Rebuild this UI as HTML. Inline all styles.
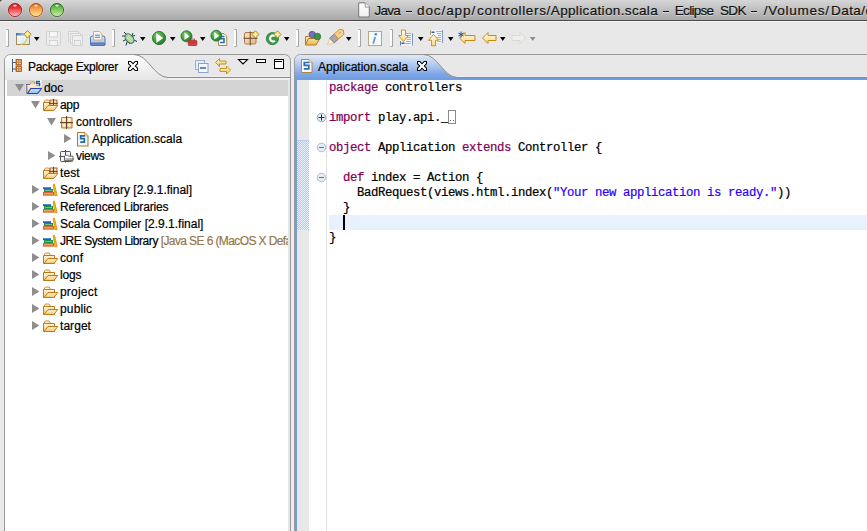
<!DOCTYPE html>
<html><head><meta charset="utf-8">
<style>
*{margin:0;padding:0;box-sizing:border-box}
html,body{width:867px;height:531px;overflow:hidden;background:#e8e8e8;font-family:"Liberation Sans",sans-serif;position:relative}
.a{position:absolute}
#title{left:0;top:0;width:867px;height:21px;background:linear-gradient(#d6d6d6,#a8a8a8);border-bottom:1px solid #4a4a4a}
.tl{width:14px;height:14px;border-radius:50%;top:3px}
.tt{top:3px;font-size:13.5px;color:#111;white-space:nowrap;line-height:16px;text-shadow:0 1px 0 rgba(255,255,255,0.45)}
.dash{top:11px;width:6px;height:1px;background:#111;box-shadow:0 1px 0 rgba(255,255,255,0.45)}
.sep{top:29px;width:3px;height:18px;border-left:1px solid #9a9a9a;border-right:1px solid #c4c4c4;background:#fafafa}
.dd{width:0;height:0;border-left:3px solid transparent;border-right:3px solid transparent;border-top:4px solid #000;top:37px}
/* panels */
#lp{left:4px;top:54px;width:287px;height:480px;border:1px solid #8f8f8f;border-radius:8px 8px 0 0;background:#fff;overflow:hidden}
#lph{left:0;top:0;width:285px;height:23px;background:#e8e8e8;border-bottom:1px solid #999}
#ep{left:294px;top:54px;width:580px;height:480px;border:1px solid #8f8f8f;border-radius:8px 8px 0 0;background:#fff;overflow:hidden}
#eph{left:0;top:0;width:580px;height:23px;background:#e8e8e8;border-bottom:1px solid #999}
.tree{font-size:12px;color:#000;white-space:nowrap;line-height:17px}
.code{font-family:"Liberation Mono",monospace;font-size:12.3px;letter-spacing:-0.38px;line-height:15px;white-space:pre;color:#000}
.kw{color:#7f0055}
.str{color:#2a00ff}
.code{-webkit-text-stroke:0.22px currentColor}
.tree,.tt{-webkit-text-stroke:0.2px currentColor}
</style></head><body>
<div id="title" class="a">
  <svg class="a" style="left:0;top:0" width="370" height="20" viewBox="0 0 370 20">
<defs>
<linearGradient id="tlr" x1="0" y1="0" x2="0" y2="1"><stop offset="0" stop-color="#c02020"/><stop offset="0.35" stop-color="#ee3434"/><stop offset="1" stop-color="#ffc4c4"/></linearGradient>
<linearGradient id="tlo" x1="0" y1="0" x2="0" y2="1"><stop offset="0" stop-color="#d05a18"/><stop offset="0.35" stop-color="#f49a48"/><stop offset="1" stop-color="#ffe890"/></linearGradient>
<linearGradient id="tlg" x1="0" y1="0" x2="0" y2="1"><stop offset="0" stop-color="#3a8a28"/><stop offset="0.35" stop-color="#72be52"/><stop offset="1" stop-color="#d0eca8"/></linearGradient>
<radialGradient id="tlh" cx="0.5" cy="0.5" r="0.5"><stop offset="0" stop-color="#fff" stop-opacity="1"/><stop offset="1" stop-color="#fff" stop-opacity="0"/></radialGradient>
<linearGradient id="gdoc" x1="0" y1="0" x2="0" y2="1"><stop offset="0" stop-color="#ffffff"/><stop offset="1" stop-color="#f0f0f0"/></linearGradient>
</defs>
<circle cx="15" cy="10" r="7.6" fill="#dcdcdc" opacity="0.5"/>
<circle cx="15" cy="10" r="6.6" fill="url(#tlr)" stroke="#9a2020" stroke-width="0.9"/>
<ellipse cx="15" cy="5.6" rx="2.6" ry="1.6" fill="url(#tlh)"/>
<circle cx="36" cy="10" r="7.6" fill="#dcdcdc" opacity="0.5"/>
<circle cx="36" cy="10" r="6.6" fill="url(#tlo)" stroke="#a8501a" stroke-width="0.9"/>
<ellipse cx="36" cy="5.6" rx="2.6" ry="1.6" fill="url(#tlh)"/>
<circle cx="57" cy="10" r="7.6" fill="#dcdcdc" opacity="0.5"/>
<circle cx="57" cy="10" r="6.6" fill="url(#tlg)" stroke="#2e6a22" stroke-width="0.9"/>
<ellipse cx="57" cy="5.6" rx="2.6" ry="1.6" fill="url(#tlh)"/>
<path d="M358.7 2.8h6.5l4.1 4.3v9.9h-10.6z" fill="url(#gdoc)" stroke="#747474" stroke-width="1"/>
<path d="M365.2 2.8v4.3h4.1" fill="#fff" stroke="#8a8a8a" stroke-width="0.9"/>
</svg>
<div class="a tt" style="left:374.40px;letter-spacing:-0.700px">Java</div>
<div class="a tt" style="left:417.00px;letter-spacing:0.914px">doc/app/</div>
<div class="a tt" style="left:477.10px;letter-spacing:0.655px">controllers/</div>
<div class="a tt" style="left:550.80px;letter-spacing:0.350px">Application.scala</div>
<div class="a tt" style="left:674.80px;letter-spacing:-0.700px">Eclipse</div>
<div class="a tt" style="left:720.05px;letter-spacing:-0.700px">SDK</div>
<div class="a tt" style="left:763.70px;letter-spacing:0.762px">/Volumes/</div>
<div class="a tt" style="left:831.00px;letter-spacing:0.450px">Data/d</div>
<div class="a dash" style="left:406px"></div>
<div class="a dash" style="left:663px"></div>
<div class="a dash" style="left:751px"></div>
</div>
<div class="a" style="left:0;top:21px;width:867px;height:1px;background:#f4f4f4"></div>
<div id="toolbar" class="a" style="left:0;top:21px;width:867px;height:33px">
<svg class="a" style="left:0;top:0" width="867" height="33" viewBox="0 21 867 33">
<defs>
 <linearGradient id="gwin" x1="0" y1="0" x2="1" y2="1"><stop offset="0" stop-color="#ffffff"/><stop offset="1" stop-color="#c8e4f8"/></linearGradient>
 <linearGradient id="gtitle" x1="0" y1="0" x2="1" y2="0"><stop offset="0" stop-color="#3a70c0"/><stop offset="1" stop-color="#b8d4f0"/></linearGradient>
 <radialGradient id="ggreen" cx="0.4" cy="0.35" r="0.7"><stop offset="0" stop-color="#8ad070"/><stop offset="0.6" stop-color="#3c9a3c"/><stop offset="1" stop-color="#1e6e28"/></radialGradient>
 <linearGradient id="gprint" x1="0" y1="0" x2="0" y2="1"><stop offset="0" stop-color="#dfe9f7"/><stop offset="1" stop-color="#9cb6de"/></linearGradient>
 <linearGradient id="garrow" x1="0" y1="0" x2="0" y2="1"><stop offset="0" stop-color="#fffcec"/><stop offset="1" stop-color="#f8d888"/></linearGradient>
 <linearGradient id="gtan" x1="0" y1="0" x2="1" y2="1"><stop offset="0" stop-color="#fbe6b8"/><stop offset="1" stop-color="#e0b880"/></linearGradient>
 <linearGradient id="gfold" x1="0" y1="0" x2="0" y2="1"><stop offset="0" stop-color="#fff0c0"/><stop offset="1" stop-color="#e8b858"/></linearGradient>
</defs>
<!-- separators -->
<path d="M6 29.5h2.5v17h-2.5" fill="#fdfdfd" stroke="#a4a4a4" stroke-width="1"/>
<rect x="6" y="29" width="1" height="1" fill="#c8c8c8"/><rect x="6" y="46" width="1" height="1" fill="#c8c8c8"/>
<path d="M112 29.5h2.5v17h-2.5" fill="#fdfdfd" stroke="#a4a4a4" stroke-width="1"/>
<rect x="112" y="29" width="1" height="1" fill="#c8c8c8"/><rect x="112" y="46" width="1" height="1" fill="#c8c8c8"/>
<path d="M234 29.5h2.5v17h-2.5" fill="#fdfdfd" stroke="#a4a4a4" stroke-width="1"/>
<rect x="234" y="29" width="1" height="1" fill="#c8c8c8"/><rect x="234" y="46" width="1" height="1" fill="#c8c8c8"/>
<path d="M296 29.5h2.5v17h-2.5" fill="#fdfdfd" stroke="#a4a4a4" stroke-width="1"/>
<rect x="296" y="29" width="1" height="1" fill="#c8c8c8"/><rect x="296" y="46" width="1" height="1" fill="#c8c8c8"/>
<path d="M358 29.5h2.5v17h-2.5" fill="#fdfdfd" stroke="#a4a4a4" stroke-width="1"/>
<rect x="358" y="29" width="1" height="1" fill="#c8c8c8"/><rect x="358" y="46" width="1" height="1" fill="#c8c8c8"/>
<path d="M390 29.5h2.5v17h-2.5" fill="#fdfdfd" stroke="#a4a4a4" stroke-width="1"/>
<rect x="390" y="29" width="1" height="1" fill="#c8c8c8"/><rect x="390" y="46" width="1" height="1" fill="#c8c8c8"/>
<!-- dropdown arrows -->
<g fill="#000">
 <path d="M34 37h5.5l-2.75 4z"/><path d="M140 37h5.5l-2.75 4z"/><path d="M170 37h5.5l-2.75 4z"/><path d="M200 37h5.5l-2.75 4z"/>
 <path d="M284 37h5.5l-2.75 4z"/><path d="M346 37h5.5l-2.75 4z"/><path d="M418 37h5.5l-2.75 4z"/><path d="M448 37h5.5l-2.75 4z"/>
 <path d="M500 37h5.5l-2.75 4z"/><path d="M530 37h5.5l-2.75 4z" fill="#8c8c8c"/>
</g>
<!-- new wizard -->
<rect x="16.5" y="33.5" width="13" height="11" fill="url(#gwin)" stroke="#a88c50"/>
<rect x="16" y="33" width="10" height="2.5" fill="url(#gtitle)"/>
<path d="M21 44.5 Q27 43 27.5 36" fill="none" stroke="#f0c840" stroke-width="1.2"/>
<path d="M27.5 30.5 L31 34.2 L27.5 38 L24 34.2z" fill="#f8e070" stroke="#a88020" stroke-width="0.9"/>
<path d="M27.5 32v4.5M25.3 34.2h4.4" stroke="#fff8c0" stroke-width="1"/>
<!-- save disabled -->
<g fill="none" stroke="#d2d2d2">
 <rect x="46.5" y="31.5" width="14" height="14" rx="1" fill="#ececec"/>
 <rect x="49.5" y="31.5" width="8" height="5.5" fill="#f6f6f6"/>
 <rect x="49.5" y="40.5" width="8" height="5" fill="#f4f4f4"/>
</g>
<!-- save all disabled -->
<g fill="#efefef" stroke="#d2d2d2">
 <rect x="68.5" y="31.5" width="10" height="10"/>
 <rect x="70.5" y="33.5" width="10" height="10"/>
 <rect x="72.5" y="35.5" width="10" height="10"/>
 <rect x="74.5" y="40.5" width="6" height="5"/>
</g>
<!-- print -->
<rect x="90.5" y="36" width="14.5" height="9.5" rx="2" fill="url(#gprint)" stroke="#4d72b0"/>
<rect x="90.5" y="43" width="14.5" height="2.5" rx="1" fill="#6a8cc8" stroke="#4d72b0"/>
<path d="M93.5 31.5h6l2.5 2.5v6h-8.5z" fill="#f6f6f8" stroke="#c8b070"/>
<path d="M95 35.2h5M95 37.3h5" stroke="#4a6ab0" stroke-width="0.9"/>
<!-- bug -->
<g stroke="#1d3a3a" stroke-width="1">
 <path d="M124 32l3 3M122 36h3.5M123 41l3-1.5M127 42l-1 3.5M133 33l-1 2.5M131 36.5l4-1M134 40l3 1.5M130 44l-1-2"/>
</g>
<ellipse cx="129.5" cy="38.5" rx="3.6" ry="5.4" transform="rotate(-40 129.5 38.5)" fill="#b4d48c" stroke="#1f6a78" stroke-width="1"/>
<path d="M127 37.5l4.5 4M128 36l4 3.5" stroke="#e8f4d0" stroke-width="0.8"/>
<!-- run -->
<circle cx="159" cy="38" r="6.6" fill="url(#ggreen)" stroke="#2a7a2a" stroke-width="0.9"/>
<path d="M156.3 33v10l6.8-5z" fill="#fff"/>
<!-- ext tools -->
<circle cx="186.5" cy="36.3" r="5.5" fill="url(#ggreen)" stroke="#2a7a2a" stroke-width="0.9"/>
<path d="M184.5 32.5v7.5l5-3.75z" fill="#fff"/>
<rect x="188.3" y="40.5" width="8.5" height="5" rx="0.8" fill="#d84040" stroke="#b02828" stroke-width="0.8"/>
<path d="M190.5 40.5v-1.5h4v1.5M188.3 42.5h8.5" fill="none" stroke="#b02828" stroke-width="0.8"/>
<!-- run scala -->
<path d="M218.5 33.5h5.5l2.7 2.7v9.3h-8.2z" fill="#fff" stroke="#a88840"/>
<path d="M224.5 36.5h-4v2.3h3.5v3.7h-4" fill="none" stroke="#2e6aa8" stroke-width="1.6"/>
<circle cx="216.3" cy="35.7" r="5.4" fill="url(#ggreen)" stroke="#2a7a2a" stroke-width="0.9"/>
<path d="M214.3 32v7.4l5-3.7z" fill="#fff"/>
<!-- new package -->
<rect x="244.5" y="32.5" width="11.5" height="11.5" rx="1.5" fill="url(#gtan)" stroke="#b07850"/>
<path d="M250.25 31.5v14M243.5 38.25h14" stroke="#5a3a28" stroke-width="0.9"/>
<path d="M255.5 30.8L259 34.4L255.5 38L252 34.4z" fill="#f8e070" stroke="#a88020" stroke-width="0.9"/>
<path d="M255.5 32.2v4.4M253.3 34.4h4.4" stroke="#fff8c0" stroke-width="1"/>
<!-- new class -->
<circle cx="272.4" cy="38.6" r="6.1" fill="#3b9a4a" stroke="#2a7a3a" stroke-width="0.8"/>
<path d="M275 36.2a3 3 0 1 0 0 4.6" fill="none" stroke="#fff" stroke-width="2.1"/>
<path d="M277.5 30.8L281 34.4L277.5 38L274 34.4z" fill="#f8e070" stroke="#a88020" stroke-width="0.9"/>
<path d="M277.5 32.2v4.4M275.3 34.4h4.4" stroke="#fff8c0" stroke-width="1"/>
<!-- open type -->
<path d="M305.5 36.5h3l1-1h3v3h7.5l-4 6.5h-10.5z" fill="url(#gfold)" stroke="#b87820"/>
<path d="M305.5 44.5l3-6h11.5" fill="none" stroke="#b87820"/>
<circle cx="312.2" cy="34.6" r="3.3" fill="#7a6cb8" stroke="#5a4c98" stroke-width="0.7"/>
<circle cx="317.4" cy="36.5" r="3.3" fill="#3a9448" stroke="#286c34" stroke-width="0.7"/>
<!-- pen -->
<g transform="translate(327.5,44.5) rotate(-42)">
<path d="M0 0L6 -3V3z" fill="#fffbe0" stroke="#e8c060" stroke-width="0.7"/>
<rect x="6" y="-3.3" width="6" height="6.6" fill="#aaa6ac" stroke="#7a7480" stroke-width="0.8"/>
<path d="M12 -3.3H19L21.5 0L19 3.3H12z" fill="#f8d48a" stroke="#d08a30" stroke-width="0.9"/>
<path d="M16 -1.2v0.8M17.5 -1.2v0.8" stroke="#3050a0" stroke-width="0.9"/>
</g>
<!-- info -->
<rect x="368.5" y="31.5" width="13" height="14" fill="#f4fafe" stroke="#b8a880"/>
<circle cx="375.8" cy="34.3" r="1.3" fill="#5c88c8"/>
<path d="M375 37.5l-1.6 5.5" stroke="#6c94d0" stroke-width="1.8" stroke-linecap="round"/>
<!-- next annotation -->
<rect x="400" y="33" width="12.5" height="12.5" fill="#f2f5fb"/>
<path d="M412.5 33v12.5" stroke="#8098c0" stroke-width="1"/>
<path d="M400.5 41v4.5" stroke="#6080b0" stroke-width="1"/>
<path d="M405 33.5h6M407 35.5h4M406 37.5h5M407 39.5h4M406 41.5h5M405 43.5h6" stroke="#9cb0d4" stroke-width="1"/>
<rect x="401.5" y="42.5" width="3" height="1.5" fill="#2e5a9e"/>
<path d="M401.5 30h4v5.5h3l-5 6-5-6h3z" fill="url(#garrow)" stroke="#c88a10" stroke-width="0.9"/>
<!-- prev annotation -->
<rect x="430" y="30" width="12.5" height="13" fill="#f2f5fb"/>
<path d="M442.5 30v13" stroke="#8098c0" stroke-width="1"/>
<path d="M430.5 30v5" stroke="#b0a078" stroke-width="1"/>
<path d="M436 31.5h6M437 33.5h4M438 35.5h3M437 37.5h4M438 39.5h3M437 41.5h4" stroke="#9cb0d4" stroke-width="1"/>
<rect x="431.5" y="31.5" width="3" height="1.5" fill="#2e5a9e"/>
<path d="M431.5 45.8h4v-5.5h3l-5-6-5 6h3z" fill="url(#garrow)" stroke="#c88a10" stroke-width="0.9"/>
<!-- last edit -->
<path d="M459.5 38l5.5-5.5v3h10v5h-10v3z" fill="url(#garrow)" stroke="#c88a10" stroke-width="1"/>
<path d="M461 31.5v6M458.4 33l5.2 3M458.4 36l5.2-3" stroke="#2850b0" stroke-width="1"/>
<!-- back -->
<path d="M482.5 38l5.5-5.5v3h8v5h-8v3z" fill="url(#garrow)" stroke="#c88a10" stroke-width="1"/>
<!-- forward disabled -->
<path d="M525.5 38l-5.5-5.5v3h-8v5h8v3z" fill="#eeeeec" stroke="#d8d8d4" stroke-width="1"/>
</svg>
</div>

<svg class="a" style="left:0;top:54px" width="867" height="477" viewBox="0 54 867 477">
<defs>
 <linearGradient id="ltab" x1="0" y1="0" x2="0" y2="1"><stop offset="0" stop-color="#fdfdfd"/><stop offset="1" stop-color="#e6e6e6"/></linearGradient>
 <linearGradient id="etab" gradientUnits="userSpaceOnUse" x1="0" y1="55" x2="0" y2="79"><stop offset="0" stop-color="#e0e9f9"/><stop offset="0.5" stop-color="#a8c2ee"/><stop offset="0.8" stop-color="#7ea6e6"/><stop offset="1" stop-color="#6e9de2"/></linearGradient>
 <pattern id="hatch" x="0" y="0" width="2" height="2" patternUnits="userSpaceOnUse"><rect width="2" height="2" fill="#e8f0fb"/><rect x="1" y="0" width="1" height="1" fill="#a8cbfa"/><rect x="0" y="1" width="1" height="1" fill="#a8cbfa"/></pattern>
</defs>
<!-- left panel -->
<path d="M4.5 531V60.5A6 6 0 0 1 10.5 54.5H284.5A6 6 0 0 1 290.5 60.5V531z" fill="#e8e8e8" stroke="#9a9a9a"/>
<rect x="5" y="78" width="285" height="453" fill="#fff"/>
<rect x="288" y="78" width="2" height="453" fill="#e6e6e6"/>
<path d="M5 78V60.5A5.5 5.5 0 0 1 10.5 55H134C148 55 154 77.5 168 77.5H290V80H5z" fill="url(#ltab)"/>
<path d="M134 54.5C148 54.5 154 77.5 168 77.5H290" fill="none" stroke="#8c8c8c"/>
<rect x="168" y="78" width="122" height="2" fill="#f0f0f0"/>
<rect x="168" y="76" width="122" height="1" fill="#eeeeee"/>
<rect x="291" y="60" width="3" height="471" fill="#ececec"/>
<!-- editor panel -->
<path d="M294.5 531V60.5A6 6 0 0 1 300.5 54.5H870V531z" fill="#e8e8e8" stroke="#9a9a9a"/>
<path d="M295 531V60.5A5.5 5.5 0 0 1 300.5 55H423.5C437.5 55 443.5 77.5 457.5 77.5H870V80H297V531z" fill="url(#etab)"/>
<rect x="295" y="78" width="575" height="2" fill="#6e9de2"/>
<rect x="295" y="78" width="2" height="453" fill="#6e9de2"/>
<path d="M423.5 54.5C437.5 54.5 443.5 77.5 457.5 77.5H870" fill="none" stroke="#8c8c8c"/>
<rect x="457" y="76" width="410" height="1" fill="#eeeeee"/>
<rect x="297" y="80" width="570" height="451" fill="#fff"/>
<rect x="297" y="80" width="12" height="451" fill="#e8e8e8"/>
<rect x="297" y="140" width="12" height="90" fill="url(#hatch)"/><rect x="297" y="140" width="12" height="1" fill="#b0d0fc"/>
<rect x="326" y="80" width="1" height="451" fill="#e2e2e2"/>
<rect x="329" y="215" width="538" height="15" fill="#e8f2fe"/>
<rect x="343" y="215" width="2" height="15" fill="#000"/>
<!-- fold markers -->
<g>
 <circle cx="321.5" cy="117.5" r="4.3" fill="#e4eef8" stroke="#8a9ab0" stroke-width="0.9"/>
 <path d="M318.5 117.5h6M321.5 114.5v6" stroke="#1a2a40" stroke-width="1"/>
 <circle cx="321.5" cy="147.5" r="4.3" fill="#e4eef8" stroke="#a8b4c4" stroke-width="0.9"/>
 <path d="M319 147.5h5" stroke="#6a7a8a" stroke-width="1.1"/>
 <circle cx="321.5" cy="177.5" r="4.3" fill="#e4eef8" stroke="#a8b4c4" stroke-width="0.9"/>
 <path d="M319 177.5h5" stroke="#6a7a8a" stroke-width="1.1"/>
</g>
<!-- left header icons -->
<g>
 <path d="M12.5 59v13M12.5 62.5h3.5M12.5 69h3.5" fill="none" stroke="#4a5a78" stroke-width="1"/>
 <rect x="16" y="59.5" width="5.5" height="5.5" fill="#c07028" stroke="#a85a1c" stroke-width="0.8"/>
 <rect x="16" y="66" width="5.5" height="5.5" fill="#c07028" stroke="#a85a1c" stroke-width="0.8"/>
 <g fill="#fff4c0">
 <rect x="17" y="60.5" width="1.3" height="1.3"/><rect x="19.3" y="60.5" width="1.3" height="1.3"/><rect x="17" y="62.8" width="1.3" height="1.3"/><rect x="19.3" y="62.8" width="1.3" height="1.3"/>
 <rect x="17" y="67" width="1.3" height="1.3"/><rect x="19.3" y="67" width="1.3" height="1.3"/><rect x="17" y="69.3" width="1.3" height="1.3"/><rect x="19.3" y="69.3" width="1.3" height="1.3"/>
 </g>
</g>
<!-- close X left tab -->
<path d="M128.00 61.00 L131.00 61.00 L133.00 63.00 L135.00 61.00 L138.00 61.00 L138.00 64.00 L136.00 66.00 L138.00 68.00 L138.00 71.00 L135.00 71.00 L133.00 69.00 L131.00 71.00 L128.00 71.00 L128.00 68.00 L130.00 66.00 L128.00 64.00Z" fill="#000"/><path d="M129.00 62.00 L130.59 62.00 L133.00 64.41 L135.41 62.00 L137.00 62.00 L137.00 63.59 L134.59 66.00 L137.00 68.41 L137.00 70.00 L135.41 70.00 L133.00 67.59 L130.59 70.00 L129.00 70.00 L129.00 68.41 L131.41 66.00 L129.00 63.59Z" fill="#fff"/>
<!-- collapse all -->
<rect x="195.5" y="60.5" width="9" height="9" fill="#e4eefa" stroke="#9ab0d0"/>
<rect x="198.5" y="63.5" width="9.5" height="9" fill="#f4f8fe" stroke="#8aa4c8"/>
<path d="M200 68h6" stroke="#1a3a7a" stroke-width="1.2"/>
<!-- link arrows -->
<path d="M215.5 62.5l4-4v2.5h6.5v3h-6.5v2.5z" fill="url(#garrow2)" stroke="#c88a10" stroke-width="0.9"/>
<path d="M230.5 70l-4 4v-2.5h-6.5v-3h6.5v-2.5z" fill="url(#garrow2)" stroke="#c88a10" stroke-width="0.9"/>
<linearGradient id="garrow2" x1="0" y1="0" x2="0" y2="1"><stop offset="0" stop-color="#fff8d0"/><stop offset="1" stop-color="#f4c860"/></linearGradient>
<!-- view menu -->
<path d="M238.5 59.5h9l-4.5 4.5z" fill="#fff" stroke="#000" stroke-width="1.1" stroke-linejoin="miter"/>
<!-- minimize -->
<rect x="256.5" y="59.5" width="9" height="3" fill="#fff" stroke="#000" stroke-width="1"/>
<!-- maximize -->
<rect x="274.5" y="59.5" width="9" height="9" fill="#fff" stroke="#000" stroke-width="1"/>
<rect x="275" y="61" width="7" height="1" fill="#000"/>
<!-- editor tab icon -->
<path d="M301.5 59.5h7.5l3 3v10h-10.5z" fill="#fbfcff" stroke="#a88a40"/>
<path d="M309 59.5v3h3" fill="#f4e8c0" stroke="#c8a860" stroke-width="0.8"/>
<path d="M309.3 62.5h-5v2.8h4.5v3.6h-5" fill="none" stroke="#2a68b0" stroke-width="1.7"/>
<!-- editor close X -->
<path d="M417.00 61.00 L420.00 61.00 L422.00 63.00 L424.00 61.00 L427.00 61.00 L427.00 64.00 L425.00 66.00 L427.00 68.00 L427.00 71.00 L424.00 71.00 L422.00 69.00 L420.00 71.00 L417.00 71.00 L417.00 68.00 L419.00 66.00 L417.00 64.00Z" fill="#000"/><path d="M418.00 62.00 L419.59 62.00 L422.00 64.41 L424.41 62.00 L426.00 62.00 L426.00 63.59 L423.59 66.00 L426.00 68.41 L426.00 70.00 L424.41 70.00 L422.00 67.59 L419.59 70.00 L418.00 70.00 L418.00 68.41 L420.41 66.00 L418.00 63.59Z" fill="#fff"/>
</svg>
<div class="a tree" style="left:28px;top:59px;letter-spacing:-0.3px">Package Explorer</div>
<div class="a tree" style="left:318px;top:59px">Application.scala</div>
<div class="a" style="left:0;top:0;width:288px;height:531px;overflow:hidden">
<div class="a" style="left:7px;top:80px;width:281px;height:16px;background:#d4d4d4"></div>
<svg class="a" style="left:0;top:0" width="288" height="531" viewBox="0 0 288 531"><defs>
<linearGradient id="tfold" x1="0" y1="0" x2="0" y2="1"><stop offset="0" stop-color="#fff8dc"/><stop offset="1" stop-color="#f0c878"/></linearGradient>
<linearGradient id="tfold2" x1="0" y1="0" x2="0" y2="1"><stop offset="0" stop-color="#fff2c8"/><stop offset="1" stop-color="#f4c870"/></linearGradient>
<linearGradient id="tblue" x1="0" y1="0" x2="0" y2="1"><stop offset="0" stop-color="#c8e4fc"/><stop offset="1" stop-color="#8cc0f4"/></linearGradient>
<linearGradient id="ttan" x1="0" y1="0" x2="0" y2="1"><stop offset="0" stop-color="#fbe8c0"/><stop offset="1" stop-color="#e8c898"/></linearGradient>
</defs>
<g transform="translate(0,80)"><path d="M15 4h9l-4.5 7.4z" fill="#8e8e8e"/>
<rect x="35" y="0" width="6.5" height="7" fill="#fff"/>
<path d="M40 1.5h-3.6v2h3.2v2.2h-3.8" fill="none" stroke="#1a5a9a" stroke-width="1.3"/>
<path d="M30.5 4.5v-1.5l1-1h3v2.5" fill="#f0d8a0" stroke="#c8a060" stroke-width="0.9"/>
<path d="M26.5 4.5h8.5v1h4v7.5h-12.5z" fill="url(#tfold)"/>
<path d="M26 4.5h4M26.8 4.5v9" stroke="#7060a0" stroke-width="1"/>
<path d="M27.5 13.5l3.3-5h10.7l-3.8 5z" fill="url(#tblue)" stroke="#2a3ec0" stroke-width="1.1" stroke-linejoin="round"/>
</g>
<g transform="translate(16,97)"><path d="M15 4h9l-4.5 7.4z" fill="#8e8e8e"/>
<path d="M28.5 5v-1l1-1h3l1 1v1" fill="#fff6d8" stroke="#c88030" stroke-width="0.9"/>
<path d="M27.5 5.5h6.5v8h-6.5z" fill="url(#tfold)" stroke="#c07820" stroke-width="1"/>
<rect x="34" y="3" width="7" height="5.5" fill="url(#ttan)" stroke="#a05a28" stroke-width="0.9"/>
<path d="M37.5 1.8v6.5M33 6.4h8.6" stroke="#5a3020" stroke-width="0.9"/>
<path d="M28 13.5l4-5h9.8l-4 5z" fill="url(#tfold2)" stroke="#c07820" stroke-width="1" stroke-linejoin="round"/>
</g>
<g transform="translate(32,114)"><path d="M15 4h9l-4.5 7.4z" fill="#8e8e8e"/>
<rect x="29.5" y="3.5" width="10.5" height="10.5" rx="0.8" fill="url(#ttan)" stroke="#c87a28" stroke-width="1.1"/>
<circle cx="32" cy="6" r="1.4" fill="#fff4c0"/><circle cx="37.3" cy="6" r="1.4" fill="#fff4c0"/>
<circle cx="32" cy="11.3" r="1.4" fill="#fff4c0"/><circle cx="37.3" cy="11.3" r="1.4" fill="#fff4c0"/>
<path d="M34.6 1.9v12.9M28 8.6h13" stroke="#5a3020" stroke-width="1"/>
</g>
<g transform="translate(48,131)"><path d="M16 3v9l7.4-4.5z" fill="#8e8e8e"/>
<path d="M29.5 1.5h7l3.5 3.5v10h-10.5z" fill="#f4f7fd" stroke="#a88030" stroke-width="1.1"/>
<path d="M36.5 1.5v3.5h3.5" fill="#e8d8a8" stroke="#c8a050" stroke-width="0.8"/>
<path d="M36.8 4.8h-4.1v2.8h3.6v3.6h-4.1" fill="none" stroke="#2a68a8" stroke-width="1.8"/>
</g>
<g transform="translate(32,148)"><path d="M16 3v9l7.4-4.5z" fill="#8e8e8e"/>
<rect x="28.5" y="3.5" width="10" height="10" rx="0.8" fill="#eef3fc" stroke="#555" stroke-width="1"/>
<path d="M33.5 2v12.7M27 8.5h6" stroke="#555" stroke-width="1"/>
<path d="M32.5 9v-1l1-0.8h2l1 1h4.5v4.5h-8.5z" fill="#fff" stroke="#555" stroke-width="0.9"/>
<path d="M33.5 11h8.5M33.5 13.3h7" stroke="#555" stroke-width="0.9"/>
</g>
<g transform="translate(16,165)">
<path d="M28.5 5v-1l1-1h3l1 1v1" fill="#fff6d8" stroke="#c88030" stroke-width="0.9"/>
<path d="M27.5 5.5h6.5v8h-6.5z" fill="url(#tfold)" stroke="#c07820" stroke-width="1"/>
<rect x="34" y="3" width="7" height="5.5" fill="url(#ttan)" stroke="#a05a28" stroke-width="0.9"/>
<path d="M37.5 1.8v6.5M33 6.4h8.6" stroke="#5a3020" stroke-width="0.9"/>
<path d="M28 13.5l4-5h9.8l-4 5z" fill="url(#tfold2)" stroke="#c07820" stroke-width="1" stroke-linejoin="round"/>
</g>
<g transform="translate(16,182)"><path d="M16 3v9l7.4-4.5z" fill="#8e8e8e"/>
<rect x="27" y="5" width="8" height="2" fill="#2060b8"/><rect x="27.5" y="5.3" width="7" height="0.7" fill="#60a8f0"/>
<rect x="28" y="7" width="9" height="3" fill="#20904a"/><rect x="29" y="8.2" width="7" height="0.8" fill="#80d0a0"/>
<rect x="27" y="10" width="11" height="3.7" fill="#d06a30"/><rect x="28" y="11.2" width="9" height="1.2" fill="#f0a878"/>
<path d="M37.2 2.5l1.2-0.5 2.8 11.7h-2.4z" fill="#f0b818" stroke="#d89000" stroke-width="0.8" stroke-linejoin="round"/>
</g>
<g transform="translate(16,199)"><path d="M16 3v9l7.4-4.5z" fill="#8e8e8e"/>
<rect x="27" y="5" width="8" height="2" fill="#2060b8"/><rect x="27.5" y="5.3" width="7" height="0.7" fill="#60a8f0"/>
<rect x="28" y="7" width="9" height="3" fill="#20904a"/><rect x="29" y="8.2" width="7" height="0.8" fill="#80d0a0"/>
<rect x="27" y="10" width="11" height="3.7" fill="#d06a30"/><rect x="28" y="11.2" width="9" height="1.2" fill="#f0a878"/>
<path d="M37.2 2.5l1.2-0.5 2.8 11.7h-2.4z" fill="#f0b818" stroke="#d89000" stroke-width="0.8" stroke-linejoin="round"/>
</g>
<g transform="translate(16,216)"><path d="M16 3v9l7.4-4.5z" fill="#8e8e8e"/>
<rect x="27" y="5" width="8" height="2" fill="#2060b8"/><rect x="27.5" y="5.3" width="7" height="0.7" fill="#60a8f0"/>
<rect x="28" y="7" width="9" height="3" fill="#20904a"/><rect x="29" y="8.2" width="7" height="0.8" fill="#80d0a0"/>
<rect x="27" y="10" width="11" height="3.7" fill="#d06a30"/><rect x="28" y="11.2" width="9" height="1.2" fill="#f0a878"/>
<path d="M37.2 2.5l1.2-0.5 2.8 11.7h-2.4z" fill="#f0b818" stroke="#d89000" stroke-width="0.8" stroke-linejoin="round"/>
</g>
<g transform="translate(16,233)"><path d="M16 3v9l7.4-4.5z" fill="#8e8e8e"/>
<rect x="27" y="5" width="8" height="2" fill="#2060b8"/><rect x="27.5" y="5.3" width="7" height="0.7" fill="#60a8f0"/>
<rect x="28" y="7" width="9" height="3" fill="#20904a"/><rect x="29" y="8.2" width="7" height="0.8" fill="#80d0a0"/>
<rect x="27" y="10" width="11" height="3.7" fill="#d06a30"/><rect x="28" y="11.2" width="9" height="1.2" fill="#f0a878"/>
<path d="M37.2 2.5l1.2-0.5 2.8 11.7h-2.4z" fill="#f0b818" stroke="#d89000" stroke-width="0.8" stroke-linejoin="round"/>
</g>
<g transform="translate(16,250)"><path d="M16 3v9l7.4-4.5z" fill="#8e8e8e"/>
<path d="M28.5 5v-1l1-1h3.5l1 1v1" fill="#fff6d8" stroke="#c88030" stroke-width="0.9"/>
<path d="M27.5 5.5h11v8h-11z" fill="url(#tfold)" stroke="#c07820" stroke-width="1"/>
<path d="M28 13.5l4-5h9.8l-4 5z" fill="url(#tfold2)" stroke="#c07820" stroke-width="1" stroke-linejoin="round"/>
</g>
<g transform="translate(16,267)"><path d="M16 3v9l7.4-4.5z" fill="#8e8e8e"/>
<path d="M28.5 5v-1l1-1h3.5l1 1v1" fill="#fff6d8" stroke="#c88030" stroke-width="0.9"/>
<path d="M27.5 5.5h11v8h-11z" fill="url(#tfold)" stroke="#c07820" stroke-width="1"/>
<path d="M28 13.5l4-5h9.8l-4 5z" fill="url(#tfold2)" stroke="#c07820" stroke-width="1" stroke-linejoin="round"/>
</g>
<g transform="translate(16,284)"><path d="M16 3v9l7.4-4.5z" fill="#8e8e8e"/>
<path d="M28.5 5v-1l1-1h3.5l1 1v1" fill="#fff6d8" stroke="#c88030" stroke-width="0.9"/>
<path d="M27.5 5.5h11v8h-11z" fill="url(#tfold)" stroke="#c07820" stroke-width="1"/>
<path d="M28 13.5l4-5h9.8l-4 5z" fill="url(#tfold2)" stroke="#c07820" stroke-width="1" stroke-linejoin="round"/>
</g>
<g transform="translate(16,301)"><path d="M16 3v9l7.4-4.5z" fill="#8e8e8e"/>
<path d="M28.5 5v-1l1-1h3.5l1 1v1" fill="#fff6d8" stroke="#c88030" stroke-width="0.9"/>
<path d="M27.5 5.5h11v8h-11z" fill="url(#tfold)" stroke="#c07820" stroke-width="1"/>
<path d="M28 13.5l4-5h9.8l-4 5z" fill="url(#tfold2)" stroke="#c07820" stroke-width="1" stroke-linejoin="round"/>
</g>
<g transform="translate(16,318)"><path d="M16 3v9l7.4-4.5z" fill="#8e8e8e"/>
<path d="M28.5 5v-1l1-1h3.5l1 1v1" fill="#fff6d8" stroke="#c88030" stroke-width="0.9"/>
<path d="M27.5 5.5h11v8h-11z" fill="url(#tfold)" stroke="#c07820" stroke-width="1"/>
<path d="M28 13.5l4-5h9.8l-4 5z" fill="url(#tfold2)" stroke="#c07820" stroke-width="1" stroke-linejoin="round"/>
</g>
</svg>
<div class="a tree" style="left:44px;top:80px;letter-spacing:-0.1px">doc</div>
<div class="a tree" style="left:60px;top:97px;letter-spacing:-0.35px">app</div>
<div class="a tree" style="left:76px;top:114px;letter-spacing:0.1px">controllers</div>
<div class="a tree" style="left:92px;top:131px;letter-spacing:0.0px">Application.scala</div>
<div class="a tree" style="left:76px;top:148px;letter-spacing:-0.3px">views</div>
<div class="a tree" style="left:60px;top:165px;letter-spacing:0.1px">test</div>
<div class="a tree" style="left:60px;top:182px;letter-spacing:0.0px">Scala Library [2.9.1.final]</div>
<div class="a tree" style="left:60px;top:199px;letter-spacing:-0.15px">Referenced Libraries</div>
<div class="a tree" style="left:60px;top:216px;letter-spacing:0.0px">Scala Compiler [2.9.1.final]</div>
<div class="a tree" style="left:60px;top:233px;letter-spacing:-0.45px">JRE System Library<span style="color:#95774a;letter-spacing:-0.6px"> [Java SE 6 (MacOS X Default)]</span></div>
<div class="a tree" style="left:60px;top:250px;letter-spacing:0.1px">conf</div>
<div class="a tree" style="left:60px;top:267px;letter-spacing:-0.2px">logs</div>
<div class="a tree" style="left:60px;top:284px;letter-spacing:0.2px">project</div>
<div class="a tree" style="left:60px;top:301px;letter-spacing:0.15px">public</div>
<div class="a tree" style="left:60px;top:318px;letter-spacing:0.05px">target</div>
</div><div class="a code" style="left:329px;top:81px"><span class="kw">package</span> controllers

<span class="kw">import</span> play.api._

<span class="kw">object</span> Application <span class="kw">extends</span> Controller {

  <span class="kw">def</span> index = Action {
    BadRequest(views.html.index(<span class="str">"Your new application is ready."</span>))
  }

}</div>
<div class="a" style="left:448px;top:110px;width:8px;height:14px;border:1px solid #8a8a8a;background:#fff"></div>
<div class="a" style="left:450px;top:120px;width:1px;height:1px;background:#666"></div>
<div class="a" style="left:453px;top:120px;width:1px;height:1px;background:#666"></div>

<div id="wcorner" class="a" style="left:0;top:0;width:1px;height:1px;background:#505050"></div>
<div class="a" style="left:1px;top:0;width:1px;height:1px;background:#9a9a9a"></div>
<div class="a" style="left:0;top:1px;width:1px;height:1px;background:#9a9a9a"></div>
</body></html>
